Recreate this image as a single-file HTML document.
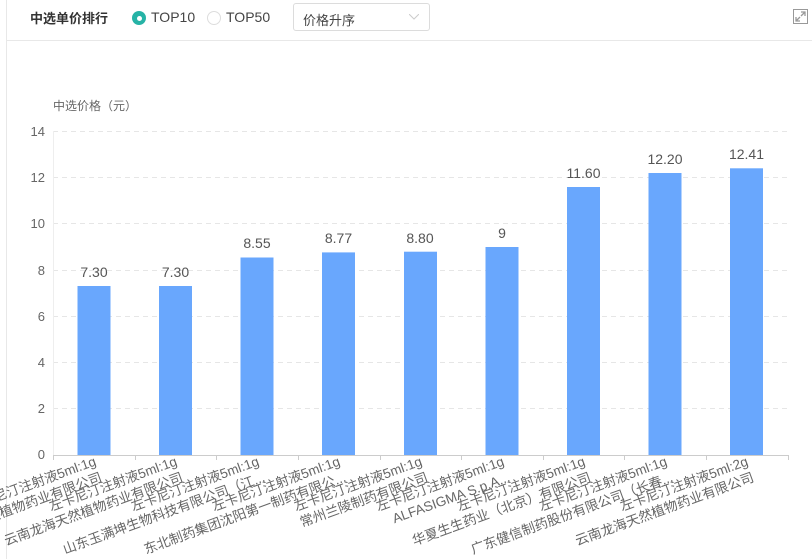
<!DOCTYPE html>
<html><head><meta charset="utf-8"><style>
body{margin:0;width:812px;height:559px;background:#fff;overflow:hidden;font-family:"Liberation Sans","Noto Sans CJK SC",sans-serif;position:relative}
.lb{position:absolute;left:6px;top:0;bottom:0;border-left:1px solid #e8e8e8}
.hb{position:absolute;left:7px;right:0;top:40px;border-top:1px solid #e8e8e8}
.t{position:absolute;left:30px;top:8px;font-size:13px;font-weight:bold;color:#333}
.r{position:absolute;top:9px;font-size:14px;color:#444}
.dot{position:absolute;top:11px;width:14px;height:14px;border-radius:50%;box-sizing:border-box}
.sel{position:absolute;left:293px;top:3px;width:137px;height:28px;border:1px solid #dcdcdc;border-radius:3px;box-sizing:border-box;font-size:13px;color:#444;padding:6px 9px}
</style></head><body>
<div class="lb"></div><div class="hb"></div>
<div class="t">中选单价排行</div>
<div class="dot" style="left:132px;background:#26b3a6"><div style="position:absolute;left:4.5px;top:4.5px;width:5px;height:5px;border-radius:50%;background:#fff"></div></div>
<div class="r" style="left:151px">TOP10</div>
<div class="dot" style="left:207px;border:1px solid #ddd"></div>
<div class="r" style="left:226px">TOP50</div>
<div class="sel">价格升序<svg style="position:absolute;right:10px;top:10px" width="10" height="6"><path d="M0 0L5 5L10 0" fill="none" stroke="#ccc"/></svg></div>
<svg style="position:absolute;left:0;top:0" width="812" height="559"><rect x="793.5" y="9.5" width="14" height="14" fill="none" stroke="#999"/><path d="M801 12H805V16M805 12L801 16M800 21H796V17M796 21L800 17" stroke="#999" fill="none" stroke-width="1.3"/></svg>
<svg style="position:absolute;left:0;top:0" width="812" height="559" font-family="Liberation Sans, Noto Sans CJK SC, sans-serif">
<text x="53" y="110" font-size="12" fill="#666">中选价格（元）</text>
<g stroke="#e6e6e6" stroke-dasharray="5,4">
<line x1="53" x2="788" y1="131.5" y2="131.5"/><line x1="53" x2="788" y1="177.5" y2="177.5"/><line x1="53" x2="788" y1="223.5" y2="223.5"/><line x1="53" x2="788" y1="270.5" y2="270.5"/><line x1="53" x2="788" y1="316.5" y2="316.5"/><line x1="53" x2="788" y1="362.5" y2="362.5"/><line x1="53" x2="788" y1="408.5" y2="408.5"/></g>
<line x1="53.5" x2="53.5" y1="131" y2="455" stroke="#eee"/>
<g font-size="13" fill="#666" text-anchor="end">
<text x="45" y="136">14</text><text x="45" y="182">12</text><text x="45" y="228">10</text><text x="45" y="275">8</text><text x="45" y="321">6</text><text x="45" y="367">4</text><text x="45" y="413">2</text><text x="45" y="459">0</text></g>
<g fill="#69a7fd">
<rect x="77.5" y="286" width="33" height="169"/><rect x="159" y="286" width="33" height="169"/><rect x="240.5" y="257.5" width="33" height="197.5"/><rect x="322" y="252.4" width="33" height="202.6"/><rect x="404" y="251.7" width="33" height="203.3"/><rect x="485.5" y="247" width="33" height="208"/><rect x="567" y="187" width="33" height="268"/><rect x="648.5" y="173" width="33" height="282"/><rect x="730" y="168.3" width="33" height="286.7"/></g>
<g stroke="#ccc"><line x1="53" x2="788" y1="455.5" y2="455.5"/>
<path d="M53.5 455v5M135.5 455v5M216.5 455v5M298.5 455v5M380.5 455v5M461.5 455v5M543.5 455v5M624.5 455v5M706.5 455v5M788.5 455v5"/></g>
<g font-size="14" fill="#555" text-anchor="middle">
<text x="94" y="277">7.30</text><text x="175.5" y="277">7.30</text><text x="257" y="248">8.55</text><text x="338.5" y="243">8.77</text><text x="420" y="243">8.80</text><text x="502" y="238">9</text><text x="583.5" y="178">11.60</text><text x="665" y="164">12.20</text><text x="746.5" y="159">12.41</text></g>
<g font-size="13.5" fill="#666" text-anchor="end">
<text transform="translate(97,465) rotate(-20)"><tspan x="0" y="0">左卡尼汀注射液5ml:1g</tspan><tspan x="0" dy="17">云南龙海天然植物药业有限公司</tspan></text>
<text transform="translate(178,465) rotate(-20)"><tspan x="0" y="0">左卡尼汀注射液5ml:1g</tspan><tspan x="0" dy="17">云南龙海天然植物药业有限公司</tspan></text>
<text transform="translate(260,465) rotate(-20)"><tspan x="0" y="0">左卡尼汀注射液5ml:1g</tspan><tspan x="0" dy="17">山东玉满坤生物科技有限公司（江...</tspan></text>
<text transform="translate(341,465) rotate(-20)"><tspan x="0" y="0">左卡尼汀注射液5ml:1g</tspan><tspan x="0" dy="17">东北制药集团沈阳第一制药有限公...</tspan></text>
<text transform="translate(423,465) rotate(-20)"><tspan x="0" y="0">左卡尼汀注射液5ml:1g</tspan><tspan x="0" dy="17">常州兰陵制药有限公司</tspan></text>
<text transform="translate(505,465) rotate(-20)"><tspan x="0" y="0">左卡尼汀注射液5ml:1g</tspan><tspan x="0" dy="17">ALFASIGMA S.p.A...</tspan></text>
<text transform="translate(586,465) rotate(-20)"><tspan x="0" y="0">左卡尼汀注射液5ml:1g</tspan><tspan x="0" dy="17">华夏生生药业（北京）有限公司</tspan></text>
<text transform="translate(668,465) rotate(-20)"><tspan x="0" y="0">左卡尼汀注射液5ml:1g</tspan><tspan x="0" dy="17">广东健信制药股份有限公司（长春...</tspan></text>
<text transform="translate(749,465) rotate(-20)"><tspan x="0" y="0">左卡尼汀注射液5ml:2g</tspan><tspan x="0" dy="17">云南龙海天然植物药业有限公司</tspan></text>
</g>
</svg>
</body></html>
